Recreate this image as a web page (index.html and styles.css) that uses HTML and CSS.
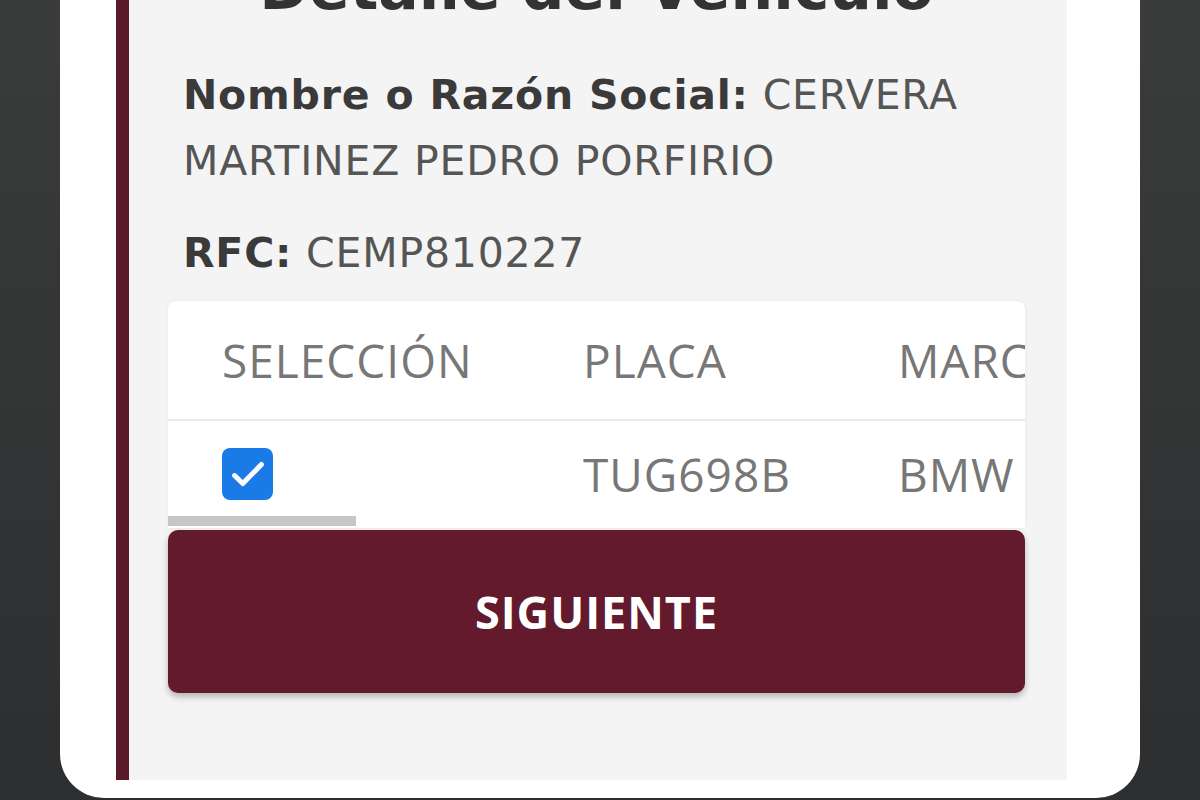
FILE: index.html
```html
<!DOCTYPE html>
<html lang="es">
<head>
    <meta charset="UTF-8">
    <meta name="viewport" content="width=device-width, initial-scale=1.0">
    <title>Detalle del Vehículo</title>
    <link rel="stylesheet" href="styles.css">
</head>
<body>
    <div class="card">
        <div class="panel">
            <h1 class="title">Detalle del Vehículo</h1>

            <div class="info">
                <p class="name"><strong>Nombre o Razón Social:</strong> CERVERA MARTINEZ PEDRO PORFIRIO</p>
                <p class="rfc"><strong>RFC:</strong> CEMP810227</p>
            </div>

            <div class="table-box">
                <div class="table-scroll">
                    <table>
                        <thead>
                            <tr>
                                <th class="col-sel">SELECCIÓN</th>
                                <th class="col-placa">PLACA</th>
                                <th class="col-marca">MARCA</th>
                            </tr>
                        </thead>
                        <tbody>
                            <tr>
                                <td class="col-sel">
                                    <span class="check">
                                        <svg viewBox="0 0 24 24" width="46" height="46">
                                            <path d="M5 12.8l4.3 4.2L19 7" fill="none" stroke="#fff" stroke-width="2.6" stroke-linecap="round" stroke-linejoin="round"/>
                                        </svg>
                                    </span>
                                </td>
                                <td class="col-placa">TUG698B</td>
                                <td class="col-marca">BMW</td>
                            </tr>
                        </tbody>
                    </table>
                </div>
                <div class="scrollbar"><div class="thumb"></div></div>
            </div>

            <button class="next">SIGUIENTE</button>
        </div>
    </div>
</body>
</html>
```

FILE: styles.css
```css
html, body {
    height: 100%;
}
body {
    margin: 0;
    overflow: hidden;
    background: linear-gradient(to bottom, #3a3c3b 0, #2c2e30 100%);
    font-family: "Open Sans", "DejaVu Sans", sans-serif;
}
.card {
    width: 1080px;
    height: 798px;
    margin-left: 60px;
    background: #ffffff;
    border-radius: 0 0 44px 44px;
    overflow: hidden;
}
.panel {
    width: 951px;
    height: 780px;
    margin-left: 56px;
    box-sizing: border-box;
    border-left: 13px solid #5a1a2a;
    background: #f4f4f4;
    padding: 0 42px 0 39px;
    overflow: hidden;
}
.title {
    margin: -42px 0 0;
    font-family: "DejaVu Sans", sans-serif;
    font-size: 60px;
    line-height: 60px;
    font-weight: 700;
    color: #333;
    text-align: center;
}
.info {
    padding-left: 15px;
    margin-top: 44px;
    color: #555;
    font-family: "DejaVu Sans", sans-serif;
    font-size: 41px;
    letter-spacing: 0.8px;
}
.info p {
    margin: 0;
    line-height: 66px;
}
.info strong {
    color: #3a3a3a;
}
.info .rfc {
    margin-top: 26px;
}
.table-box {
    margin-top: 15px;
    background: #fff;
    border-radius: 8px 8px 0 0;
    box-shadow: 0 0 4px rgba(0, 0, 0, 0.06);
}
.table-scroll {
    overflow: hidden;
}
table {
    border-collapse: collapse;
    width: 1100px;
    color: #777;
    font-size: 46px;
    letter-spacing: 1px;
    text-align: left;
}
th {
    font-weight: 500;
    height: 118px;
    border-bottom: 2px solid #e8e8e8;
    padding: 0 0 0 54px;
}
td {
    height: 85px;
    padding: 10px 0 0 54px;
}
.col-sel {
    width: 307px;
}
.col-placa {
    width: 261px;
}
.check {
    display: flex;
    align-items: center;
    justify-content: center;
    width: 51px;
    height: 52px;
    border-radius: 8px;
    background: #1a7be6;
}
.scrollbar {
    height: 12px;
}
.thumb {
    width: 188px;
    height: 10px;
    background: #c6c6c6;
}
.next {
    display: block;
    width: 100%;
    height: 163px;
    margin-top: 2px;
    border: none;
    border-radius: 10px;
    background: #621a2c;
    color: #fff;
    font-family: "Open Sans", "DejaVu Sans", sans-serif;
    font-size: 45px;
    font-weight: 700;
    letter-spacing: 1px;
    box-shadow: 0 4px 6px rgba(0, 0, 0, 0.25);
    cursor: pointer;
}
```
